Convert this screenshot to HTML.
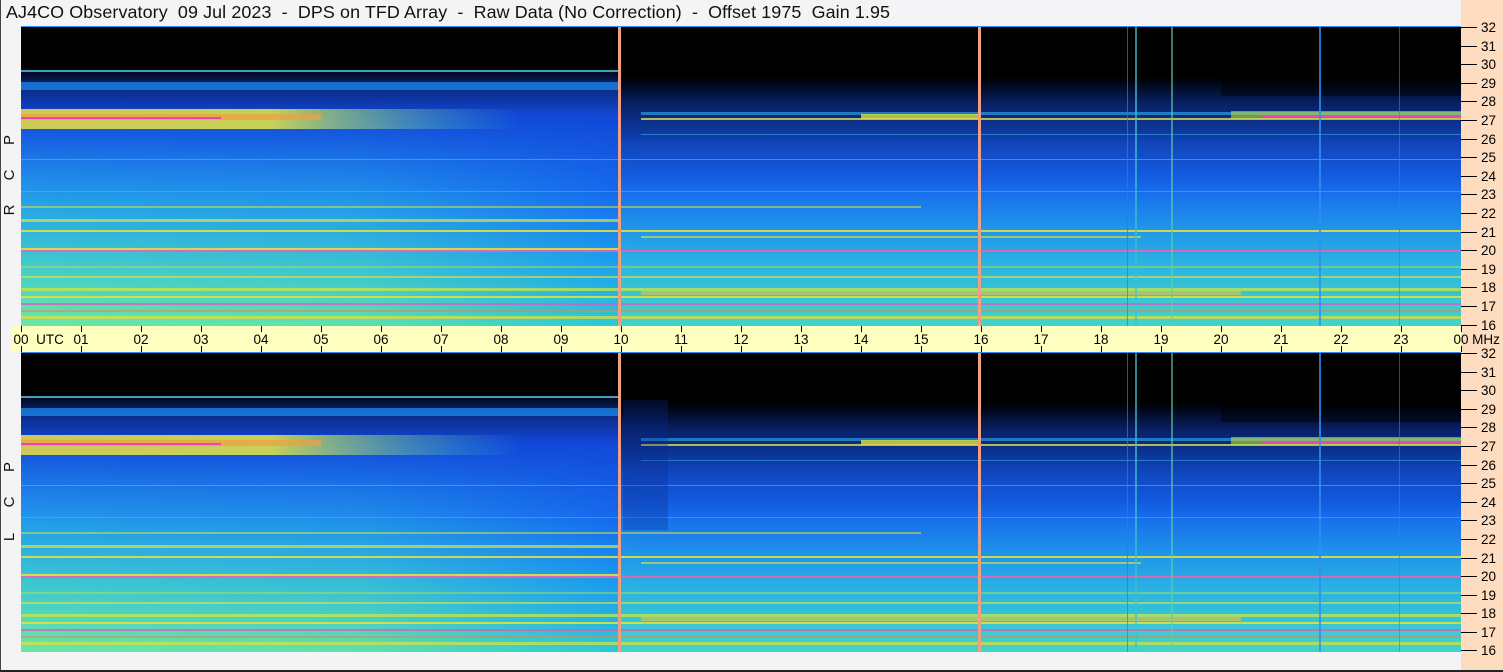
<!DOCTYPE html>
<html><head><meta charset="utf-8"><style>
html,body{margin:0;padding:0}
body{width:1503px;height:672px;position:relative;overflow:hidden;background:#f4f4f6;font-family:"Liberation Sans",sans-serif}
.title{position:absolute;left:6px;top:2px;font-size:17.9px;color:#111;white-space:pre;letter-spacing:0.1px}
.rcol{position:absolute;left:1461px;top:0;width:42px;height:672px;background:#fddcbf}
.axis{position:absolute;left:12px;top:326px;width:1449px;height:26px;background:#ffffc0}
.border{position:absolute;left:0;top:0;width:1503px;height:672px;box-sizing:border-box;border-left:1px solid #444;border-bottom:2px solid #222;pointer-events:none}
</style></head><body>
<div class="title">AJ4CO Observatory  09 Jul 2023  -  DPS on TFD Array  -  Raw Data (No Correction)  -  Offset 1975  Gain 1.95</div>
<div class="rcol"></div>
<div class="axis"></div>

<svg width="1503" height="672" style="position:absolute;left:0;top:0">
<defs>
<linearGradient id="base" x1="0" y1="0" x2="0" y2="1">
<stop offset="0" stop-color="#0a2a9a"/><stop offset="0.3" stop-color="#1248d8"/><stop offset="0.55" stop-color="#1566ee"/><stop offset="0.8" stop-color="#1a9ef0"/><stop offset="1" stop-color="#28c8d8"/></linearGradient>
<linearGradient id="lgreen" x1="0" y1="0" x2="0" y2="1">
<stop offset="0.3" stop-color="#30c0f0" stop-opacity="0"/><stop offset="0.6" stop-color="#30c8e0" stop-opacity="0.6"/><stop offset="1" stop-color="#70e8a0" stop-opacity="0.95"/></linearGradient>
<linearGradient id="lfade" x1="0" y1="0" x2="1" y2="0">
<stop offset="0" stop-color="#fff" stop-opacity="1"/><stop offset="0.55" stop-color="#fff" stop-opacity="0.8"/><stop offset="1" stop-color="#fff" stop-opacity="0"/></linearGradient>
<mask id="m1"><rect x="0" y="0" width="620" height="300" fill="url(#lfade)"/></mask>
<linearGradient id="rgreen" x1="0" y1="0" x2="0" y2="1">
<stop offset="0.5" stop-color="#30c8e0" stop-opacity="0"/><stop offset="1" stop-color="#50d8c0" stop-opacity="0.7"/></linearGradient>
<linearGradient id="blk1" x1="0" y1="0" x2="0" y2="1">
<stop offset="0" stop-color="#000"/><stop offset="0.14" stop-color="#000"/><stop offset="0.2" stop-color="#000" stop-opacity="0.35"/><stop offset="0.3" stop-color="#000" stop-opacity="0"/></linearGradient>
<linearGradient id="blk2" x1="0" y1="0" x2="0" y2="1">
<stop offset="0" stop-color="#000"/><stop offset="0.17" stop-color="#000"/><stop offset="0.26" stop-color="#000510" stop-opacity="0.55"/><stop offset="0.4" stop-color="#000" stop-opacity="0.15"/><stop offset="0.55" stop-color="#000" stop-opacity="0"/></linearGradient>
<linearGradient id="band" x1="0" y1="0" x2="1" y2="0">
<stop offset="0" stop-color="#f0e040"/><stop offset="0.5" stop-color="#e8e840"/><stop offset="1" stop-color="#40d8c0" stop-opacity="0"/></linearGradient>
<g id="panel">
<rect x="0" y="0" width="1440" height="300" fill="url(#base)"/>
<rect x="0" y="0" width="620" height="300" fill="url(#lgreen)" mask="url(#m1)"/>
<rect x="600" y="0" width="840" height="300" fill="url(#rgreen)"/>
<rect x="0" y="0" width="600" height="300" fill="url(#blk1)"/>
<rect x="600" y="0" width="840" height="300" fill="url(#blk2)"/>
<rect x="1200" y="40" width="240" height="30" fill="#000" opacity="0.45"/>
<rect x="0" y="56" width="600" height="8" fill="#1a90f0" opacity="0.7"/>
<rect x="0" y="83" width="500" height="20" fill="url(#band)" opacity="0.85"/>
<rect x="0" y="88" width="300" height="6" fill="#f0a040" opacity="0.7"/>
<rect x="0" y="91" width="200" height="2" fill="#f040c0"/>
<rect x="0" y="44" width="600" height="2" fill="#50c8f0" opacity="0.8"/>
<rect x="620" y="92" width="820" height="2" fill="#e0e040" opacity="0.8"/>
<rect x="620" y="86" width="820" height="3" fill="#30b0f0" opacity="0.6"/>
<rect x="1210" y="85" width="230" height="8" fill="#c0e040" opacity="0.6"/>
<rect x="1240" y="90" width="200" height="2" fill="#f040c0"/>
<rect x="840" y="88" width="120" height="5" fill="#e0e040" opacity="0.8"/>
<g opacity="0.9">
<rect x="0" y="204" width="1440" height="2" fill="#e0e040"/>
<rect x="0" y="224" width="1440" height="2" fill="#f060b0"/>
<rect x="0" y="222" width="600" height="2" fill="#e0e040"/>
<rect x="0" y="270" width="1440" height="2" fill="#e0e040"/>
<rect x="0" y="277" width="1440" height="2" fill="#f050c0" opacity="0.8"/>
<rect x="0" y="262" width="1440" height="3" fill="#d0e840" opacity="0.8"/>
<rect x="0" y="290" width="1440" height="3" fill="#e0e040" opacity="0.8"/>
<rect x="0" y="180" width="900" height="2" fill="#e0e040" opacity="0.6"/>
<rect x="0" y="193" width="600" height="3" fill="#e0e040" opacity="0.8"/>
<rect x="620" y="210" width="500" height="2" fill="#e0e040" opacity="0.7"/>
<rect x="0" y="250" width="1440" height="2" fill="#e0e040" opacity="0.7"/>
<rect x="0" y="240" width="1440" height="2" fill="#c0e840" opacity="0.5"/>
<rect x="0" y="133" width="1440" height="1" fill="#40d0f0" opacity="0.6"/>
<rect x="0" y="165" width="1440" height="1" fill="#40d0f0" opacity="0.5"/>
<rect x="0" y="284" width="1440" height="2" fill="#f08040" opacity="0.6"/>
<rect x="620" y="265" width="600" height="4" fill="#f0c040" opacity="0.7"/>
<rect x="620" y="108" width="820" height="1" fill="#40d0f0" opacity="0.5"/>
</g>
<rect x="597" y="0" width="3" height="300" fill="#f0a080"/>
<rect x="957" y="0" width="3" height="300" fill="#f0a080"/>
<rect x="1114" y="0" width="2" height="300" fill="#40c0d0" opacity="0.7"/>
<rect x="1106" y="0" width="1" height="300" fill="#2080f0" opacity="0.7"/>
<rect x="1150" y="0" width="2" height="300" fill="#60d0a0" opacity="0.6"/>
<rect x="1298" y="0" width="2" height="300" fill="#3090f0" opacity="0.8"/>
<rect x="1378" y="0" width="1" height="300" fill="#3080f0" opacity="0.6"/>
<rect x="0" y="0" width="1440" height="1" fill="#3090f0"/>
</g>
</defs>
<use href="#panel" x="21" y="26"/>
<use href="#panel" x="21" y="352"/>
<rect x="623" y="400" width="45" height="130" fill="#0a2a90" opacity="0.3"/>
<g stroke="#000" stroke-width="1">
<path d="M21.5 326v6M81.5 326v6M141.5 326v6M201.5 326v6M261.5 326v6M321.5 326v6M381.5 326v6M441.5 326v6M501.5 326v6M561.5 326v6M621.5 326v6M681.5 326v6M741.5 326v6M801.5 326v6M861.5 326v6M921.5 326v6M981.5 326v6M1041.5 326v6M1101.5 326v6M1161.5 326v6M1221.5 326v6M1281.5 326v6M1341.5 326v6M1401.5 326v6M1461.5 326v6"/>
<path d="M21.5 346v6M81.5 346v6M141.5 346v6M201.5 346v6M261.5 346v6M321.5 346v6M381.5 346v6M441.5 346v6M501.5 346v6M561.5 346v6M621.5 346v6M681.5 346v6M741.5 346v6M801.5 346v6M861.5 346v6M921.5 346v6M981.5 346v6M1041.5 346v6M1101.5 346v6M1161.5 346v6M1221.5 346v6M1281.5 346v6M1341.5 346v6M1401.5 346v6M1461.5 346v6"/>
<path d="M1461 27.5h16M1461 46.5h16M1461 64.5h16M1461 83.5h16M1461 101.5h16M1461 120.5h16M1461 139.5h16M1461 157.5h16M1461 176.5h16M1461 194.5h16M1461 213.5h16M1461 232.5h16M1461 250.5h16M1461 269.5h16M1461 287.5h16M1461 306.5h16M1461 325.5h16"/>
<path d="M1461 353.5h16M1461 372.5h16M1461 390.5h16M1461 409.5h16M1461 427.5h16M1461 446.5h16M1461 465.5h16M1461 483.5h16M1461 502.5h16M1461 520.5h16M1461 539.5h16M1461 558.5h16M1461 576.5h16M1461 595.5h16M1461 613.5h16M1461 632.5h16M1461 650.5h16"/>
</g>
<g font-family="Liberation Sans, sans-serif" font-size="13.5" fill="#000">
<text x="1481" y="32">32</text><text x="1481" y="51">31</text><text x="1481" y="69">30</text><text x="1481" y="88">29</text><text x="1481" y="106">28</text><text x="1481" y="125">27</text><text x="1481" y="144">26</text><text x="1481" y="162">25</text><text x="1481" y="181">24</text><text x="1481" y="199">23</text><text x="1481" y="218">22</text><text x="1481" y="237">21</text><text x="1481" y="255">20</text><text x="1481" y="274">19</text><text x="1481" y="292">18</text><text x="1481" y="311">17</text><text x="1481" y="330">16</text>
<text x="1481" y="358">32</text><text x="1481" y="377">31</text><text x="1481" y="395">30</text><text x="1481" y="414">29</text><text x="1481" y="432">28</text><text x="1481" y="451">27</text><text x="1481" y="470">26</text><text x="1481" y="488">25</text><text x="1481" y="507">24</text><text x="1481" y="525">23</text><text x="1481" y="544">22</text><text x="1481" y="563">21</text><text x="1481" y="581">20</text><text x="1481" y="600">19</text><text x="1481" y="618">18</text><text x="1481" y="637">17</text><text x="1481" y="655">16</text>
</g>
<g font-family="Liberation Sans, sans-serif" font-size="13.5" fill="#000" text-anchor="middle">
<text x="21" y="344">00</text><text x="50" y="344">UTC</text><text x="81" y="344">01</text><text x="141" y="344">02</text><text x="201" y="344">03</text><text x="261" y="344">04</text><text x="321" y="344">05</text><text x="381" y="344">06</text><text x="441" y="344">07</text><text x="501" y="344">08</text><text x="561" y="344">09</text><text x="621" y="344">10</text><text x="681" y="344">11</text><text x="741" y="344">12</text><text x="801" y="344">13</text><text x="861" y="344">14</text><text x="921" y="344">15</text><text x="981" y="344">16</text><text x="1041" y="344">17</text><text x="1101" y="344">18</text><text x="1161" y="344">19</text><text x="1221" y="344">20</text><text x="1281" y="344">21</text><text x="1341" y="344">22</text><text x="1401" y="344">23</text><text x="1461" y="344">00</text>
<text x="1486" y="344">MHz</text>
</g>
<g font-family="Liberation Sans, sans-serif" font-size="15" fill="#111" text-anchor="middle">
<text transform="translate(14,140) rotate(-90)">P</text>
<text transform="translate(14,175) rotate(-90)">C</text>
<text transform="translate(14,210) rotate(-90)">R</text>
<text transform="translate(14,467) rotate(-90)">P</text>
<text transform="translate(14,502) rotate(-90)">C</text>
<text transform="translate(14,537) rotate(-90)">L</text>
</g>
</svg>
<div class="border"></div>
</body></html>
